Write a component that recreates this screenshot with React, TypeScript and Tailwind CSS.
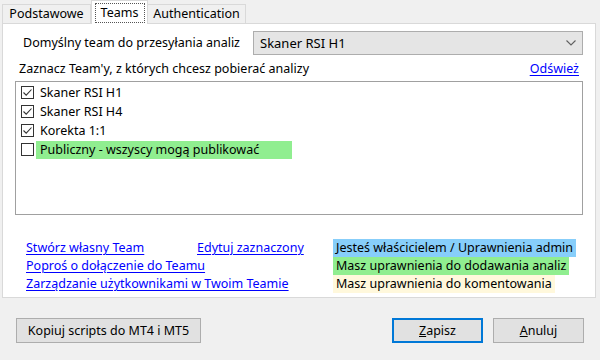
import React from "react";

const font = { fontFamily: '"Noto Sans", "Open Sans", sans-serif' };

function Check({ checked }: { checked: boolean }) {
  return (
    <div className="flex h-[13px] w-[13px] items-center justify-center border border-[#333333] bg-white">
      {checked && (
        <svg width="11" height="11" viewBox="0 0 11 11">
          <path d="M1.5 5.5 L4.2 8.2 L9.5 2.5" fill="none" stroke="#333333" strokeWidth="1.1" />
        </svg>
      )}
    </div>
  );
}

const teams = [
  { name: "Skaner RSI H1", checked: true, bg: "" },
  { name: "Skaner RSI H4", checked: true, bg: "" },
  { name: "Korekta 1:1", checked: true, bg: "" },
  { name: "Publiczny - wszyscy mogą publikować", checked: false, bg: "bg-[#90ee90] w-[256px]" },
];

function Link({ children }: { children: React.ReactNode }) {
  return <span className="text-[#0000ff] underline underline-offset-2 decoration-1">{children}</span>;
}

export default function App() {
  return (
    <div
      className="h-[360px] w-[600px] overflow-hidden bg-[#f0f0f0] text-[12.5px] leading-[18px] text-black"
      style={font}
    >
      {/* tabs */}
      <div className="flex h-[23px] items-end pl-[2px]">
        <div className="flex h-[19px] w-[89px] items-center justify-center border border-b-0 border-[#d9d9d9] bg-[#f0f0f0]">
          Podstawowe
        </div>
        <div className="relative z-10 -mb-px flex h-[24px] w-[57px] items-center justify-center border border-b-0 border-[#d9d9d9] bg-white">
          <div className="flex h-[20px] w-[50px] items-center justify-center border border-dotted border-[#555]">
            Teams
          </div>
        </div>
        <div className="flex h-[19px] w-[98px] items-center justify-center border border-b-0 border-l-0 border-[#d9d9d9] bg-[#f0f0f0]">
          Authentication
        </div>
      </div>

      {/* panel */}
      <div className="ml-[2px] h-[275px] w-[594px] border border-[#d9d9d9] bg-white">
        <div className="mt-[7px] flex items-center">
          <div className="w-[250px] whitespace-nowrap pl-[20px]">Domyślny team do przesyłania analiz</div>
          <div className="flex h-[24px] w-[330px] items-center justify-between border border-[#adadad] bg-[#e5e5e5] pl-[6px] pr-[5px] text-[13px]">
            <span>Skaner RSI H1</span>
            <svg width="12" height="8" viewBox="0 0 12 8">
              <path d="M1.5 1.5 L6 6 L10.5 1.5" fill="none" stroke="#606060" strokeWidth="1.1" />
            </svg>
          </div>
        </div>

        <div className="mt-[5px] flex h-[18px] items-center justify-between pl-[16px] pr-[16px]">
          <span>Zaznacz Team'y, z których chcesz pobierać analizy</span>
          <Link>Odśwież</Link>
        </div>

        <div className="ml-[12px] mt-[3px] h-[134px] w-[568px] border border-[#a0a0a0] bg-white pt-px">
          {teams.map((t) => (
            <div key={t.name} className="flex h-[19px] items-center pl-[5px]">
              <Check checked={t.checked} />
              <div className={"ml-[2px] flex h-[18px] items-center pl-[4px] " + t.bg}>{t.name}</div>
            </div>
          ))}
        </div>

        <div className="mt-[24px] flex">
          <div className="w-[330px] pl-[23px]">
            <div className="flex h-[18px] items-center">
              <div className="w-[171px]">
                <Link>Stwórz własny Team</Link>
              </div>
              <Link>Edytuj zaznaczony</Link>
            </div>
            <div className="flex h-[18px] items-center">
              <Link>Poproś o dołączenie do Teamu</Link>
            </div>
            <div className="flex h-[18px] items-center">
              <Link>Zarządzanie użytkownikami w Twoim Teamie</Link>
            </div>
          </div>
          <div className="flex flex-col items-start">
            <div className="h-[18px] bg-[#87cefa] pl-[3px] pr-[3px]">Jesteś właścicielem / Uprawnienia admin</div>
            <div className="h-[18px] bg-[#90ee90] pl-[3px] pr-[3px]">Masz uprawnienia do dodawania analiz</div>
            <div className="h-[18px] bg-[#fff8dc] pl-[3px] pr-[3px]">Masz uprawnienia do komentowania</div>
          </div>
        </div>
      </div>

      {/* bottom buttons */}
      <div className="mt-[20px] flex items-center pl-[16px]">
        <div className="flex h-[25px] w-[185px] items-center justify-center border border-[#adadad] bg-[#e1e1e1]">
          Kopiuj scripts do MT4 i MT5
        </div>
        <div className="ml-[191px] flex h-[25px] w-[91px] items-center justify-center border-2 border-[#0078d7] bg-[#e1e1e1]">
          <span>
            <span className="underline">Z</span>apisz
          </span>
        </div>
        <div className="ml-[10px] flex h-[25px] w-[91px] items-center justify-center border border-[#adadad] bg-[#e1e1e1]">
          <span>
            <span className="underline">A</span>nuluj
          </span>
        </div>
      </div>
    </div>
  );
}
